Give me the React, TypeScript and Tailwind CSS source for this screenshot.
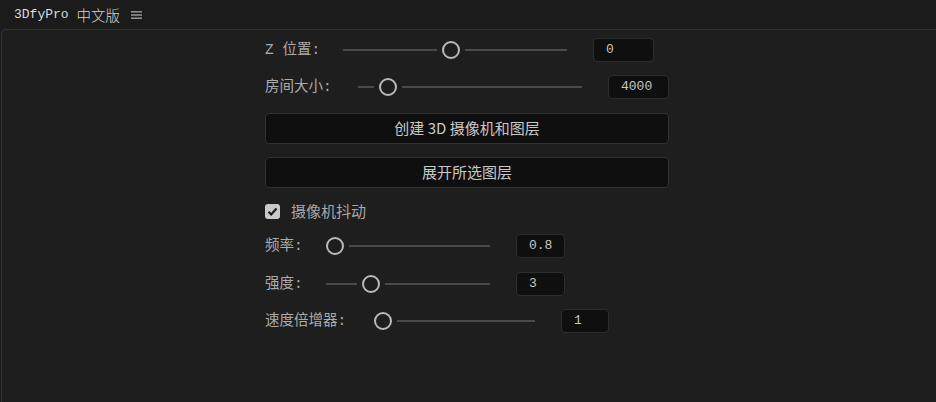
import React from "react";

const MONO = "font-['Liberation_Mono','Noto_Sans_CJK_SC',monospace]";
const SANS = "font-['Noto_Sans_CJK_SC','Noto_Sans',sans-serif]";

function Slider({ width, center }: { width: number; center: number }) {
  return (
    <div className="relative h-[24px] shrink-0" style={{ width }}>
      {center - 14 > 0 && (
        <div
          className="absolute top-[11px] left-0 h-[2px] bg-[#4a4a4a]"
          style={{ width: center - 14 }}
        />
      )}
      <div
        className="absolute top-[11px] h-[2px] bg-[#4a4a4a]"
        style={{ left: center + 14, width: width - center - 14 }}
      />
      <div
        className="absolute top-[3px] h-[18px] w-[18px] rounded-full border-[2.5px] border-[#b9b9b9] bg-[#1e1e1e]"
        style={{ left: center - 9 }}
      />
    </div>
  );
}

function Row({
  label,
  labelClass,
  sliderW,
  center,
  inputClass,
  value,
  mt,
}: {
  label: string;
  labelClass: string;
  sliderW: number;
  center: number;
  inputClass: string;
  value: string;
  mt: string;
}) {
  return (
    <div className={`flex h-[24px] items-center ${mt}`}>
      <div
        className={`shrink-0 whitespace-nowrap text-[14.5px] leading-[24px] text-[#ababab] ${MONO} ${labelClass}`}
      >
        {label}
      </div>
      <Slider width={sliderW} center={center} />
      <div
        className={`ml-[26px] h-[24px] shrink-0 rounded-[4px] border border-[#2d2d2d] bg-[#0f0f0f] pl-[12px] text-[13px] leading-[22px] text-[#c6c6c6] ${MONO} ${inputClass}`}
      >
        {value}
      </div>
    </div>
  );
}

export default function App() {
  return (
    <div className="flex h-[402px] w-[936px] flex-col overflow-hidden bg-[#1b1b1b]">
      <div className="flex h-[29px] shrink-0 items-center pl-[14px]">
        <span className={`text-[13px] text-[#d8dce2] ${MONO}`}>3DfyPro</span>
        <span className={`ml-[8px] text-[14.5px] font-light text-[#d4d4d4] ${SANS}`}>中文版</span>
        <svg className="ml-[11px]" width="11" height="10" viewBox="0 0 11 10">
          <rect x="0" y="1" width="11" height="1.6" fill="#8e8e8e" />
          <rect x="0" y="4.2" width="11" height="1.6" fill="#8e8e8e" />
          <rect x="0" y="7.4" width="11" height="1.6" fill="#8e8e8e" />
        </svg>
      </div>
      <div className="ml-[1px] flex flex-1 flex-col rounded-tl-[5px] border-t border-l border-[#323232] bg-[#1e1e1e]">
        <div className="ml-[263px] flex w-[404px] flex-col">
          <Row label="Z 位置:" labelClass="w-[78px]" sliderW={224} center={108} inputClass="w-[61px]" value="0" mt="mt-[8px]" />
          <Row label="房间大小:" labelClass="w-[93px]" sliderW={224} center={30} inputClass="w-[61px]" value="4000" mt="mt-[13px]" />
          <button
            className={`mt-[14px] h-[31px] w-[404px] rounded-[4px] border border-[#303030] bg-[#0f0f0f] text-[15px] text-[#c8c8c8] ${SANS}`}
          >
            创建 3D 摄像机和图层
          </button>
          <button
            className={`mt-[13px] h-[31px] w-[404px] rounded-[4px] border border-[#303030] bg-[#0f0f0f] text-[15px] text-[#c8c8c8] ${SANS}`}
          >
            展开所选图层
          </button>
          <div className="mt-[11px] flex h-[24px] items-center">
            <div className="flex h-[15px] w-[15px] items-center justify-center rounded-[3px] bg-[#c9c9c9]">
              <svg width="13" height="13" viewBox="0 0 13 13">
                <path d="M2.5 6.8 L5.2 9.5 L10.5 3.6" fill="none" stroke="#1a1a1a" strokeWidth="2.2" />
              </svg>
            </div>
            <span className={`ml-[11px] text-[15px] text-[#a8a8a8] ${SANS}`}>摄像机抖动</span>
          </div>
          <Row label="频率:" labelClass="w-[61px]" sliderW={164} center={9} inputClass="w-[49px]" value="0.8" mt="mt-[11px]" />
          <Row label="强度:" labelClass="w-[61px]" sliderW={164} center={45} inputClass="w-[49px]" value="3" mt="mt-[14px]" />
          <Row label="速度倍增器:" labelClass="w-[109px]" sliderW={161} center={9} inputClass="w-[48px]" value="1" mt="mt-[13px]" />
        </div>
      </div>
    </div>
  );
}
